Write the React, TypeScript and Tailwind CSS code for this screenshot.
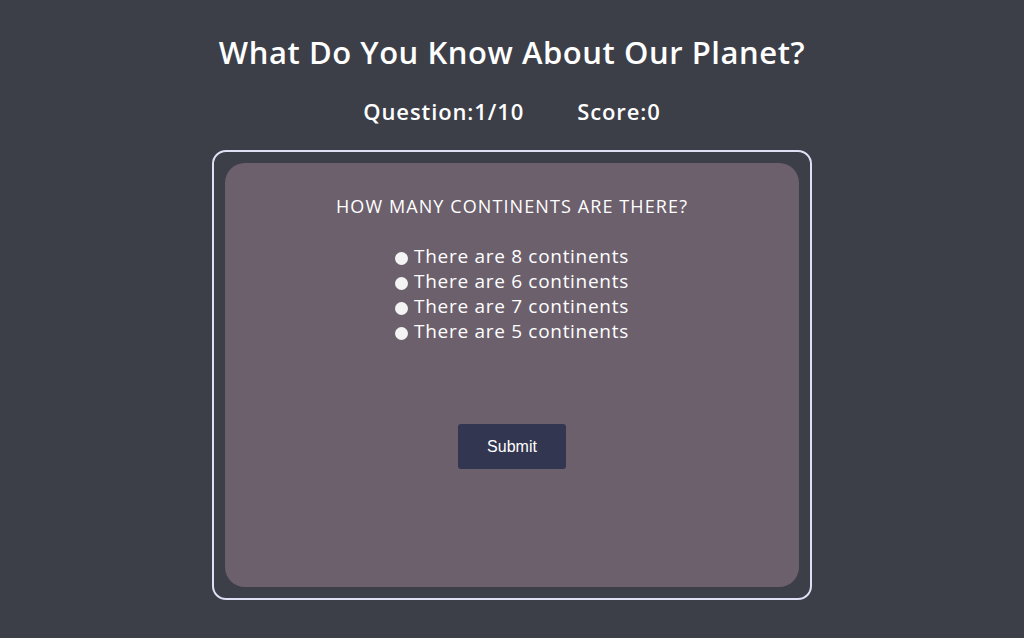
import React from "react";

const hand = { fontFamily: '"Open Sans", "Noto Sans", sans-serif' };

export default function App() {
  const options = [
    "There are 8 continents",
    "There are 6 continents",
    "There are 7 continents",
    "There are 5 continents",
  ];
  return (
    <div className="min-h-[638px] w-full bg-[#3c3e48] flex flex-col items-center text-white" style={hand}>
      <h1 className="mt-[30px] text-[31px] leading-[44px] font-semibold tracking-[0.55px]">
        What Do You Know About Our Planet?
      </h1>
      <div className="mt-[22px] flex gap-[53px] text-[22px] leading-[30px] font-semibold tracking-[0.9px]">
        <span>Question:1/10</span>
        <span>Score:0</span>
      </div>
      <div className="mt-[24px] w-[600px] h-[450px] border-[2px] border-[#dfe0f4] rounded-[14px] p-[11px]">
        <div className="w-full h-full bg-[#6c606d] rounded-[20px] flex flex-col items-center pt-[31px]">
          <p className="text-[18px] leading-[24px] font-medium tracking-[1.1px]">HOW MANY CONTINENTS ARE THERE?</p>
          <div className="mt-[26px] flex flex-col">
            {options.map((o) => (
              <label key={o} className="flex items-center h-[25px] text-[19px] font-medium tracking-[0.7px]">
                <span className="w-[13px] h-[13px] rounded-full bg-[#f4f4f4] mr-[6px] mt-[4px] inline-block" />
                <span>{o}</span>
              </label>
            ))}
          </div>
          <button
            className="mt-[80px] w-[108px] h-[45px] bg-[#333650] rounded-[3px] text-[16px] text-white"
            style={{ fontFamily: '"Liberation Sans", Arial, sans-serif' }}
          >
            Submit
          </button>
        </div>
      </div>
    </div>
  );
}
